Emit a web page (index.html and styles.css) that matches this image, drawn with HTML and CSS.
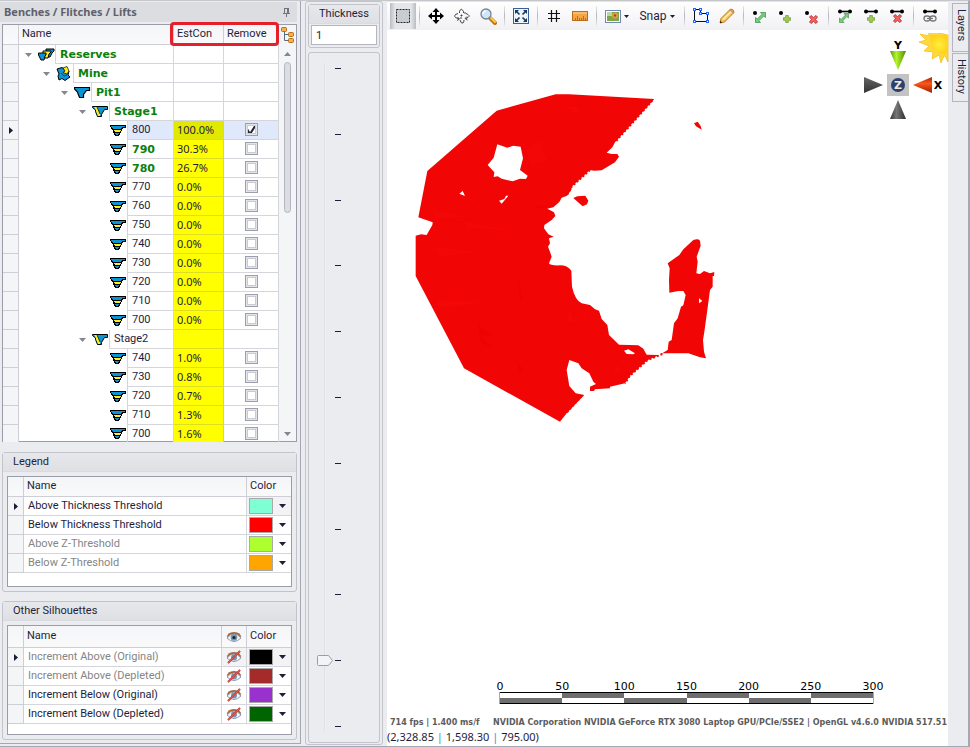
FILE: index.html
```html
<!DOCTYPE html>
<html lang="en">
	<head>
		<meta charset="utf-8">
		<title>Benches / Flitches / Lifts</title>
		<link rel="stylesheet" href="styles.css">
	</head>
	<body>
		<!-- shared icons -->
		<svg class="defs" aria-hidden="true">
			<symbol id="bench" viewBox="0 0 17 13">
				<path d="M0 1h16v3h-3v1h-1v2h-1v2h-1v2H9v1H5v-1H4V9H3V6H2V5H1V3H0z" fill="#000"/>
				<path d="M1 2h14v1h-3v1h-1v1H3V4H2V3H1z" fill="#0a94d6"/>
				<path d="M4 6h7v1h-1v1H5V7H4z" fill="#ffee1c"/>
				<path d="M5 9h4v1H8v1H6v-1H5z" fill="#0a94d6"/>
			</symbol>
			<symbol id="stage" viewBox="0 0 17 13">
				<path d="M.5 1.500h15v3h-3l-3 5v2h-4l-2-5V5l-3-2.500z" fill="#0a94d6" stroke="#000"/>
				<path d="M2 2h3l3 7v2H6L4 6V5z" fill="#ffee1c"/>
				<path d="M5 2l3 7" stroke="#000" stroke-width=".7"/>
			</symbol>
			<symbol id="pit" viewBox="0 0 17 13">
				<path d="M.5 1.500h15v3h-3l-3 4v3h-4l-2-5V6l-3-3z" fill="#0a94d6" stroke="#000" stroke-width="1.200"/>
			</symbol>
			<symbol id="mine" viewBox="0 0 17 16">
				<path d="M1 3l5-1.500L8 3l5 2-1 4 2 2-5 3.500-3-2-3 1.500L2 10l1-2z" fill="#0a94d6" stroke="#000"/>
				<path d="M7 2l4-1.500L13 5l-2 3-4-1.500L9 5z" fill="#ffee1c" stroke="#000" stroke-width=".7"/>
				<path d="M5 7l3 3 3-1" fill="none" stroke="#123" stroke-width=".7"/>
			</symbol>
			<symbol id="reserves" viewBox="0 0 17 13">
				<path d="M8 1h8v2l-2 2-2 4h-2L8 5z" fill="#0a94d6" stroke="#000"/>
				<path d="M5 3h8v1l-2 2-1 4H7L5 6z" fill="#ffee1c" stroke="#000"/>
				<path d="M.5 5H8v2L7 8l-1 4H3L.5 7z" fill="#0a94d6" stroke="#000"/>
			</symbol>
			<symbol id="caret" viewBox="0 0 7 4"><path d="M0 0h7L3.500 4z" fill="currentColor"/></symbol>
			<symbol id="caret-up" viewBox="0 0 7 4"><path d="M0 4h7L3.500 0z" fill="currentColor"/></symbol>
			<symbol id="row-mark" viewBox="0 0 4 7"><path d="M0 0l4 3.500L0 7z" fill="#1a1a38"/></symbol>
			<symbol id="eye" viewBox="0 0 16 12">
				<path d="M1 7q7-8 14 0-7 7-14 0z" fill="#f4f7fb" stroke="#8197b8"/>
				<circle cx="8" cy="6.500" r="3.300" fill="#7695ab"/>
				<circle cx="8" cy="6.500" r="1.600" fill="#17263c"/>
				<path d="M1 5.500q7-7 14 0M2 3.500q6-4 12 0" fill="none" stroke="#a8643c" stroke-width="1.200"/>
			</symbol>
			<symbol id="eye-off" viewBox="0 0 16 14">
				<path d="M1 8q7-8 14 0-7 7-14 0z" fill="#f4f7fb" stroke="#8197b8"/>
				<circle cx="8" cy="7.500" r="3" fill="#7695ab"/>
				<path d="M1 6.500q7-7 14 0M2 4.500q6-4 12 0" fill="none" stroke="#a8643c" stroke-width="1.200"/>
				<path d="M2 13L14 1" stroke="#a8383a" stroke-width="2"/>
				<path d="M2 13L14 1" stroke="#e4574f" stroke-width="1.200"/>
			</symbol>
			<symbol id="resize" viewBox="0 0 12 12">
				<path d="M6 .5h5.500V6L9.500 4.300 4.300 9.500 6 11.500H.5V6l2 1.700 5.200-5.200z" fill="#7ccb7c" stroke="#35934a" stroke-width=".8"/>
			</symbol>
			<symbol id="plus" viewBox="0 0 9 9">
				<path d="M3 .5h3V3h2.500v3H6v2.500H3V6H.5V3H3z" fill="#9fc95a" stroke="#6b9a2c" stroke-width=".8"/>
			</symbol>
			<symbol id="cross" viewBox="0 0 9 9">
				<path d="M2 .5l2.500 2 2.500-2L8.500 2l-2 2.500 2 2.500L7 8.500l-2.500-2-2.500 2L.5 7l2-2.500L.5 2z" fill="#f26464" stroke="#b8252a" stroke-width=".8"/>
			</symbol>
			<symbol id="bar" viewBox="0 0 14 5">
				<path d="M1 2.500h12" stroke="#000" stroke-width="1.600"/>
				<circle cx="2" cy="2.500" r="2"/><circle cx="12" cy="2.500" r="2"/>
			</symbol>
		</svg>

		<div class="app">
			<aside class="sidebar">
				<header class="dock-title">
					<h1>Benches / Flitches / Lifts</h1>
					<button class="pin" aria-label="Auto hide">
						<svg width="9" height="9" viewBox="0 0 9 9"><path d="M2.500 0v5M6.500 0v5M5.500 0v5M2 .5h5M1 5.500h7M4.500 6v3" stroke="#70737f" fill="none"/></svg>
					</button>
				</header>

				<section class="tree">
					<table class="tree-table">
						<colgroup><col class="c-mark"><col><col class="c-est"><col class="c-remove"></colgroup>
						<thead>
							<tr><th></th><th>Name</th><th>EstCon</th><th>Remove</th></tr>
						</thead>
						<tbody>
							<tr><td></td><td><div class="node l0"><svg class="caret"><use href="#caret"/></svg><svg class="ico"><use href="#reserves"/></svg><span class="on">Reserves</span></div></td><td></td><td></td></tr>
							<tr><td></td><td><div class="node l1"><svg class="caret"><use href="#caret"/></svg><svg class="ico tall"><use href="#mine"/></svg><span class="on">Mine</span></div></td><td></td><td></td></tr>
							<tr><td></td><td><div class="node l2"><svg class="caret"><use href="#caret"/></svg><svg class="ico"><use href="#pit"/></svg><span class="on">Pit1</span></div></td><td></td><td></td></tr>
							<tr><td></td><td><div class="node l3"><svg class="caret"><use href="#caret"/></svg><svg class="ico"><use href="#stage"/></svg><span class="on">Stage1</span></div></td><td></td><td></td></tr>
							<tr class="selected"><td><svg class="mark"><use href="#row-mark"/></svg></td><td><div class="node leaf"><svg class="ico"><use href="#bench"/></svg><span>800</span></div></td><td class="est">100.0%</td><td><input type="checkbox" aria-label="Remove 800" checked></td></tr>
							<tr><td></td><td><div class="node leaf"><svg class="ico"><use href="#bench"/></svg><span class="on">790</span></div></td><td class="est">30.3%</td><td><input type="checkbox" aria-label="Remove 790"></td></tr>
							<tr><td></td><td><div class="node leaf"><svg class="ico"><use href="#bench"/></svg><span class="on">780</span></div></td><td class="est">26.7%</td><td><input type="checkbox" aria-label="Remove 780"></td></tr>
							<tr><td></td><td><div class="node leaf"><svg class="ico"><use href="#bench"/></svg><span>770</span></div></td><td class="est">0.0%</td><td><input type="checkbox" aria-label="Remove 770"></td></tr>
							<tr><td></td><td><div class="node leaf"><svg class="ico"><use href="#bench"/></svg><span>760</span></div></td><td class="est">0.0%</td><td><input type="checkbox" aria-label="Remove 760"></td></tr>
							<tr><td></td><td><div class="node leaf"><svg class="ico"><use href="#bench"/></svg><span>750</span></div></td><td class="est">0.0%</td><td><input type="checkbox" aria-label="Remove 750"></td></tr>
							<tr><td></td><td><div class="node leaf"><svg class="ico"><use href="#bench"/></svg><span>740</span></div></td><td class="est">0.0%</td><td><input type="checkbox" aria-label="Remove 740"></td></tr>
							<tr><td></td><td><div class="node leaf"><svg class="ico"><use href="#bench"/></svg><span>730</span></div></td><td class="est">0.0%</td><td><input type="checkbox" aria-label="Remove 730"></td></tr>
							<tr><td></td><td><div class="node leaf"><svg class="ico"><use href="#bench"/></svg><span>720</span></div></td><td class="est">0.0%</td><td><input type="checkbox" aria-label="Remove 720"></td></tr>
							<tr><td></td><td><div class="node leaf"><svg class="ico"><use href="#bench"/></svg><span>710</span></div></td><td class="est">0.0%</td><td><input type="checkbox" aria-label="Remove 710"></td></tr>
							<tr><td></td><td><div class="node leaf"><svg class="ico"><use href="#bench"/></svg><span>700</span></div></td><td class="est">0.0%</td><td><input type="checkbox" aria-label="Remove 700"></td></tr>
							<tr><td></td><td><div class="node l3"><svg class="caret"><use href="#caret"/></svg><svg class="ico"><use href="#stage"/></svg><span>Stage2</span></div></td><td class="est"></td><td></td></tr>
							<tr><td></td><td><div class="node leaf"><svg class="ico"><use href="#bench"/></svg><span>740</span></div></td><td class="est">1.0%</td><td><input type="checkbox" aria-label="Remove Stage2 740"></td></tr>
							<tr><td></td><td><div class="node leaf"><svg class="ico"><use href="#bench"/></svg><span>730</span></div></td><td class="est">0.8%</td><td><input type="checkbox" aria-label="Remove Stage2 730"></td></tr>
							<tr><td></td><td><div class="node leaf"><svg class="ico"><use href="#bench"/></svg><span>720</span></div></td><td class="est">0.7%</td><td><input type="checkbox" aria-label="Remove Stage2 720"></td></tr>
							<tr><td></td><td><div class="node leaf"><svg class="ico"><use href="#bench"/></svg><span>710</span></div></td><td class="est">1.3%</td><td><input type="checkbox" aria-label="Remove Stage2 710"></td></tr>
							<tr><td></td><td><div class="node leaf"><svg class="ico"><use href="#bench"/></svg><span>700</span></div></td><td class="est">1.6%</td><td><input type="checkbox" aria-label="Remove Stage2 700"></td></tr>
						</tbody>
					</table>
					<div class="scroll">
						<button class="tree-menu" aria-label="Choose levels">
							<svg width="14" height="16" viewBox="0 0 14 16"><path d="M3.500 5v8.500H7M3.500 7.500H7" fill="none" stroke="#5a6a80"/><g fill="#f6b04e" stroke="#b86d1a"><rect x=".5" y=".5" width="5" height="4" rx="1"/><rect x="7.500" y="5.500" width="5" height="4" rx="1"/><rect x="7.500" y="11.500" width="5" height="4" rx="1"/></g></svg>
						</button>
						<svg class="caret"><use href="#caret-up"/></svg>
						<div class="scroll-track"><div class="scroll-thumb"></div></div>
						<svg class="caret"><use href="#caret"/></svg>
					</div>
					<div class="highlight"></div>
				</section>

				<section class="group">
					<h2>Legend</h2>
					<div class="grid-box">
						<table class="grid">
							<colgroup><col class="c-mark"><col><col class="c-color"></colgroup>
							<thead><tr><th></th><th>Name</th><th>Color</th></tr></thead>
							<tbody>
								<tr class="current"><td><svg class="mark"><use href="#row-mark"/></svg></td><td>Above Thickness Threshold</td><td><div class="color"><i class="swatch aqua"></i><select aria-label="Above Thickness Threshold color"></select></div></td></tr>
								<tr><td></td><td>Below Thickness Threshold</td><td><div class="color"><i class="swatch red"></i><select aria-label="Below Thickness Threshold color"></select></div></td></tr>
								<tr class="off"><td></td><td>Above Z-Threshold</td><td><div class="color"><i class="swatch lime"></i><select aria-label="Above Z-Threshold color"></select></div></td></tr>
								<tr class="off"><td></td><td>Below Z-Threshold</td><td><div class="color"><i class="swatch orange"></i><select aria-label="Below Z-Threshold color"></select></div></td></tr>
							</tbody>
						</table>
					</div>
				</section>

				<section class="group others">
					<h2>Other Silhouettes</h2>
					<div class="grid-box">
						<table class="grid">
							<colgroup><col class="c-mark"><col><col class="c-eye"><col class="c-color"></colgroup>
							<thead><tr><th></th><th>Name</th><th class="eye"><svg width="16" height="12"><use href="#eye"/></svg></th><th>Color</th></tr></thead>
							<tbody>
								<tr class="off current"><td><svg class="mark"><use href="#row-mark"/></svg></td><td>Increment Above (Original)</td><td class="eye"><svg width="16" height="14"><use href="#eye-off"/></svg></td><td><div class="color"><i class="swatch black"></i><select aria-label="Increment Above (Original) color"></select></div></td></tr>
								<tr class="off"><td></td><td>Increment Above (Depleted)</td><td class="eye"><svg width="16" height="14"><use href="#eye-off"/></svg></td><td><div class="color"><i class="swatch brown"></i><select aria-label="Increment Above (Depleted) color"></select></div></td></tr>
								<tr><td></td><td>Increment Below (Original)</td><td class="eye"><svg width="16" height="14"><use href="#eye-off"/></svg></td><td><div class="color"><i class="swatch purple"></i><select aria-label="Increment Below (Original) color"></select></div></td></tr>
								<tr><td></td><td>Increment Below (Depleted)</td><td class="eye"><svg width="16" height="14"><use href="#eye-off"/></svg></td><td><div class="color"><i class="swatch green"></i><select aria-label="Increment Below (Depleted) color"></select></div></td></tr>
							</tbody>
						</table>
					</div>
				</section>
			</aside>

			<section class="thickness">
				<div class="thick-box">
					<label for="thick">Thickness</label>
					<input id="thick" type="text" value="1">
				</div>
				<div class="slider-box">
					<input type="range" min="0" max="10" value="1" aria-label="Thickness">
					<div class="ticks"><i></i><i></i><i></i><i></i><i></i><i></i><i></i><i></i><i></i><i></i><i></i></div>
				</div>
			</section>

			<main class="view">
				<nav class="toolbar">
					<button class="pressed" aria-label="Select"><svg width="16" height="16" viewBox="0 0 16 16"><rect x="1.500" y="1.500" width="13" height="13" fill="#c9ccd2" stroke="#222" stroke-dasharray="2 1"/></svg></button>
					<hr>
					<button aria-label="Pan"><svg width="16" height="16" viewBox="0 0 16 16"><path d="M8 2v12M2 8h12" stroke="#000" stroke-width="2"/><path d="M8 0l3.500 4h-7zM8 16l3.500-4h-7zM0 8l4-3.500v7zM16 8l-4-3.500v7z"/></svg></button>
					<button aria-label="Orbit"><svg width="16" height="16" viewBox="0 0 16 16"><g fill="none" stroke="#444"><path d="M5.500 5V3.500Q7-1 9.500 3.500V5M4 5.500Q-1 7 1.500 9.500L5 11M3 12.500L5.500 11 3.500 9M12 5.500q5 2 2 4l-2 1M13.500 12L11 10.500l2-2M6 12q1 4 3 3 1-1 1-3M6.500 7.500h2M7.500 6.500v2M10 5h2M6 10h2"/></g></svg></button>
					<button aria-label="Zoom"><svg width="17" height="17" viewBox="0 0 17 17"><path d="M10 10l5 5" stroke="#b6781c" stroke-width="4" stroke-linecap="round"/><path d="M11 10l4 4" stroke="#ffc84a" stroke-width="2" stroke-linecap="round"/><circle cx="6" cy="6" r="5" fill="#cfe5f8" stroke="#77828f" stroke-width="1.300"/><path d="M3 6q0-3 3-3" fill="none" stroke="#fff" stroke-width="1.500"/></svg></button>
					<hr>
					<button aria-label="Zoom to fit"><svg width="16" height="16" viewBox="0 0 16 16"><rect x=".5" y=".5" width="15" height="15" fill="#eef4fb" stroke="#3c5f9c"/><path d="M3 3l3.500 3.500M13 3L9.500 6.500M3 13l3.500-3.500M13 13L9.500 9.500" stroke="#17365f" stroke-width="1.600"/><path d="M2 2h4L2 6zM14 2h-4l4 4zM2 14h4l-4-4zM14 14h-4l4-4z" fill="#17365f"/></svg></button>
					<hr>
					<button aria-label="Grid"><svg width="12" height="12" viewBox="0 0 12 12"><path d="M3.500 0v12M8.500 0v12M0 3.500h12M0 8.500h12" stroke="#111" stroke-width="1.200"/></svg></button>
					<button aria-label="Measure"><svg width="16" height="10" viewBox="0 0 16 10"><rect x=".5" y=".5" width="15" height="9" fill="#f3a648" stroke="#bf6c18"/><path d="M1 2h14" stroke="#fbd08e"/><path d="M3.500 9V7M5.500 9V5M7.500 9V7M9.500 9V7M11.500 9V5M13.500 9V7" stroke="#a4601a" stroke-width=".8"/></svg></button>
					<hr>
					<button class="drop" aria-label="Background"><svg width="16" height="13" viewBox="0 0 16 13"><rect x=".5" y=".5" width="15" height="12" fill="#fff" stroke="#7087b8"/><path d="M2 2h12v9H2z" fill="#7da646"/><path d="M2 2h5v4H2z" fill="#b7d8a0"/><circle cx="10" cy="5.500" r="3" fill="#e79a45"/><circle cx="10" cy="5.500" r="1.200" fill="#a34a20"/></svg><svg class="caret"><use href="#caret"/></svg></button>
					<button class="drop snap">Snap<svg class="caret"><use href="#caret"/></svg></button>
					<hr>
					<button aria-label="Draw polygon"><svg width="16" height="16" viewBox="0 0 16 16"><path d="M1.500 2v11.500h13V5.500h-7V1.500H2" fill="none" stroke="#111"/><g fill="#fff" stroke="#2464f0"><rect x=".5" y=".5" width="2" height="2"/><rect x="6.500" y=".5" width="2" height="2"/><rect x="6.500" y="4.500" width="2" height="2"/><rect x="13.500" y="4.500" width="2" height="2"/><rect x=".5" y="12.500" width="2" height="2"/><rect x="13.500" y="12.500" width="2" height="2"/></g></svg></button>
					<button aria-label="Edit"><svg width="16" height="16" viewBox="0 0 16 16"><path d="M1 15l1-4.500L11.500 1q3.500 0 3.500 3.500L5.500 14z" fill="#f7c35c" stroke="#b87a20"/><path d="M4 11.500L13 3" stroke="#fff0c0" stroke-width="1.400"/><path d="M11 1.500l3.500 3.500" stroke="#d98c70" stroke-width="1.500"/><path d="M1 15l.5-2 1.500 1.500z"/></svg></button>
					<hr>
					<button aria-label="Move point"><svg width="16" height="16" viewBox="0 0 16 16"><circle cx="3" cy="5" r="2"/><use href="#resize" x="3" y="4" width="11" height="11"/></svg></button>
					<button aria-label="Add point"><svg width="16" height="16" viewBox="0 0 16 16"><circle cx="3" cy="5" r="2"/><use href="#plus" x="5" y="7" width="8" height="8"/></svg></button>
					<button aria-label="Delete point"><svg width="16" height="16" viewBox="0 0 16 16"><circle cx="3" cy="5" r="2"/><use href="#cross" x="5" y="7" width="9" height="9"/></svg></button>
					<hr>
					<button aria-label="Move edge"><svg width="16" height="16" viewBox="0 0 16 16"><use href="#bar" x="1" y="1" width="14" height="5"/><use href="#resize" x="2" y="5" width="10" height="10"/></svg></button>
					<button aria-label="Add edge"><svg width="16" height="16" viewBox="0 0 16 16"><use href="#bar" x="1" y="1" width="14" height="5"/><use href="#plus" x="4" y="7" width="8" height="8"/></svg></button>
					<button aria-label="Delete edge"><svg width="16" height="16" viewBox="0 0 16 16"><use href="#bar" x="1" y="1" width="14" height="5"/><use href="#cross" x="4" y="6" width="9" height="9"/></svg></button>
					<hr>
					<button aria-label="Link edges"><svg width="16" height="16" viewBox="0 0 16 16"><use href="#bar" x="1" y="1" width="14" height="5"/><g fill="none" stroke="#777" stroke-width="1.300"><rect x="2" y="8" width="6" height="5" rx="2.500"/><rect x="8" y="8" width="6" height="5" rx="2.500"/><path d="M5 10.500h6"/></g></svg></button>
				</nav>

				<div class="scene">
					<svg class="model" width="330" height="350" viewBox="0 0 990 1050" role="img" aria-label="Bench silhouette">
						<path fill="#f20505" fill-rule="evenodd" d="M467 43L507 43 763 57 645 187 637 202 620 218 635 222 652 222 657 230 645 247 615 265 605 271 582 272 570 270 515 320 514 330 501 347 485 353 478 366 460 382 442 386 462 397 466 408 455 420 433 435 432 445 445 463 461 470 447 475 450 490 444 500 449 513 455 530 447 550Q450 557 480 556 502 556 514 572L516 620Q525 660 545 670L570 675 585 688 597 692 605 717 622 735 627 765 657 794 715 796 730 806 740 824 778 825 803 810 806 785 815 780 822 730 833 715 843 680 850 676 857 645 850 633 835 633 808 638 807 600 809 565 803 550 838 525 850 508 880 480Q895 475 900 482L902 497 890 530 893 545 889 580 900 582 912 573 930 580 943 576 942 588H938V620L930 630 922 690 913 755 909 780 912 815 918 835 900 832 865 820H790L742 841 690 887 675 910 630 920V925L585 928 582 933H570V920L588 912 580 905 568 880 545 865 535 850 508 840 500 870 508 918 527 940 553 945 500 1000 480 1025 192 865 47 588V467L63 463 80 465 97 435 98 427 55 412 82 273 290 92zM292 193L281 233 263 255 283 277 281 291 293 289 305 296 338 304 360 296 378 297 383 287 360 270 369 235 362 200 340 197 322 203zM178 341L188 333 195 348zM297 362L313 357 318 347 325 347 305 371zM672 812L685 808 705 820 700 823 680 822zM897 655L907 663 897 670z"/>
						<!-- block edges -->
						<path fill="none" stroke="#f20505" stroke-width="6" stroke-dasharray="6 6" d="M757 62L645 187M570 270L515 320 500 347M787 822L742 841 690 887 675 910M545 948L500 998"/>
						<path fill="#f20505" d="M882 130l11-5 9 13 3 11-17-10zM520 354l12-5 24-2 9 15-4 11-13 6z"/>
						<g fill="#e00000" opacity=".25"><path d="M234 735l44 30-38 5zM238 760l36 42-30-14zM356 600l12 60-10-10zM350 840l20 30-12 5zM400 380l50-5-20 12z"/></g>
						<g fill="#ff1515" opacity=".15"><path d="M90 390l120 20-100 5zM190 425l180 28-170-8zM100 500l130 15-110 18zM110 660l180 5-170 18zM500 80l30 0 20 30zM380 210l40-30 20 60-50 20zM510 680l14 50-24-5zM550 690l15 30-15-5zM655 850l8 30-28-2z"/></g>
					</svg>
					<svg class="compass" width="90" height="94" viewBox="860 33 90 94" role="img" aria-label="View orientation">
						<defs>
							<linearGradient id="gy"><stop offset="0" stop-color="#5f9c0a"/><stop offset=".4" stop-color="#b4f52e"/><stop offset="1" stop-color="#4f8a05"/></linearGradient>
							<linearGradient id="gk"><stop offset="0" stop-color="#333"/><stop offset=".4" stop-color="#777"/><stop offset="1" stop-color="#2c2c2c"/></linearGradient>
							<linearGradient id="gkv" x2="0" y2="1"><stop offset="0" stop-color="#666"/><stop offset="1" stop-color="#333"/></linearGradient>
							<linearGradient id="gr" x2="0" y2="1"><stop offset="0" stop-color="#a62400"/><stop offset=".4" stop-color="#ff5518"/><stop offset="1" stop-color="#9c2200"/></linearGradient>
							<radialGradient id="gs"><stop offset="0" stop-color="#ffef3c"/><stop offset="1" stop-color="#ffd21c"/></radialGradient>
						</defs>
						<path d="M948 35V62l-3-6-1 0-3 7-2-8-7 4 1-7-9-1 5-5-10-4 7-2-6-6 10 2-4-6z" fill="#ffd83a" stroke="#f2b400" stroke-width=".6"/>
						<path d="M930 35h18v19q-17 2-18-19z" fill="url(#gs)"/>
						<path d="M890 51h16l-8 19z" fill="url(#gy)"/>
						<path d="M890 119h16l-8-19z" fill="url(#gk)"/>
						<path d="M864 77v16l19-8z" fill="url(#gkv)"/>
						<path d="M932 77v16l-19-8z" fill="url(#gr)"/>
						<rect x="887" y="74" width="22" height="22" fill="#c3c3c3"/>
						<circle cx="898" cy="85" r="7" fill="#2c4070"/>
						<text x="898" y="89" class="z">Z</text>
						<text x="898" y="49">Y</text>
						<text x="938" y="89">X</text>
					</svg>
				</div>

				<div class="scale">
					<div class="scale-labels"><span>0</span><span>50</span><span>100</span><span>150</span><span>200</span><span>250</span><span>300</span></div>
					<div class="scale-bar"><i></i><i></i><i></i><i></i><i></i><i></i></div>
				</div>
				<div class="stats"><span>714 fps | 1.400 ms/f</span><span>NVIDIA Corporation NVIDIA GeForce RTX 3080 Laptop GPU/PCIe/SSE2 | OpenGL v4.6.0 NVIDIA 517.51</span></div>
				<div class="coords">(2,328.85 <b>|</b> 1,598.30 <b>|</b> 795.00)</div>
			</main>

			<aside class="side-tabs">
				<button>Layers</button>
				<button>History</button>
			</aside>
		</div>
	</body>
</html>
```
FILE: styles.css
```css
* {
	box-sizing: border-box;
	margin: 0;
	padding: 0;
}

body {
	height: 100vh;
	background-color: #ebecef;
	color: #1e1e3c;
	font: 11px/18px Roboto, "Liberation Sans", sans-serif;
	overflow: hidden;
}

button,
input,
select {
	font: inherit;
	color: inherit;
	border: 0;
	background: none;
}

svg {
	display: block;
	flex: none;
}

.defs {
	position: absolute;
	width: 0;
	height: 0;
}

.app {
	display: flex;
	height: 100%;
	border: 1px solid #a5a7b3;
	border-left: 0;
	border-top-color: #c5c7cb;
	border-right: 2px solid #a5a7b3;
}

/* left column */
.sidebar {
	display: flex;
	flex-direction: column;
	flex: none;
	width: 301px;
	margin-bottom: 2px;
	padding: 0 3px 3px 2px;
	border-right: 1px solid #a5a7b3;
	border-bottom: 1px solid #a5a7b3;
}

.dock-title {
	display: flex;
	align-items: center;
	justify-content: space-between;
	height: 20px;
	margin: 1px 0 2px -2px;
	padding: 0 6px 0 4px;
	background-color: #dcdde1;
}

h1 {
	font: bold 11px/18px "Noto Sans", sans-serif;
	color: #5f626d;
}

h2 {
	height: 19px;
	padding-left: 10px;
	font-size: 11px;
	font-weight: normal;
	border-bottom: 1px solid #dadbe0;
	background: linear-gradient(#e7e8eb, #dfe0e4);
}

/* tree list */
.tree {
	position: relative;
	display: flex;
	flex: 1;
	min-height: 0;
	overflow: clip;
	overflow-clip-margin: 3px;
	border: 1px solid #9a9caa;
	background-color: #fff;
	margin-bottom: 10px;
}

table {
	flex: 1;
	width: 100%;
	table-layout: fixed;
	border-spacing: 0;
}

.tree-table {
	align-self: flex-start;
}

.c-mark {
	width: 16px;
}

.c-est {
	width: 50px;
}

.c-remove {
	width: 55px;
}

.c-eye {
	width: 25px;
}

.c-color {
	width: 44px;
}

th {
	height: 20px;
	padding-left: 3px;
	font-weight: normal;
	text-align: left;
	vertical-align: top;
	border-right: 1px solid #cdced6;
	border-bottom: 1px solid #cdced6;
	background: linear-gradient(#f4f5f7, #fafafb);
}

td {
	height: 19px;
	border-right: 1px solid #d5d6dc;
	border-bottom: 1px solid #d5d6dc;
	white-space: nowrap;
}

td:first-child {
	border-color: #cdced6;
	background-color: #f4f5f7;
}

.tree-table td:nth-child(2) {
	border-bottom: 0;
}

.mark {
	width: 4px;
	height: 7px;
	margin: 0 auto;
}

.node {
	display: flex;
	align-items: center;
	height: 19px;
}

.l0 { padding-left: 6px; }
.l1 { padding-left: 24px; }
.l2 { padding-left: 42px; }
.l3 { padding-left: 60px; }
.leaf { padding-left: 91px; }

.caret {
	width: 7px;
	height: 4px;
	color: #85868f;
}

.node .caret {
	margin-right: 6px;
}

.ico {
	width: 17px;
	height: 13px;
}

.ico.tall {
	height: 16px;
}

.node span {
	flex: 1;
	height: 19px;
	padding-left: 4px;
	border-left: 1px solid #d5d6dc;
	border-bottom: 1px solid #d5d6dc;
}

.node .on {
	font: bold 11px/19px "DejaVu Sans", sans-serif;
	color: #0c800c;
}

td.est {
	padding-left: 3px;
	font-family: "Noto Sans", sans-serif;
	background-color: #ff0;
	border-color: #dede20;
}

.selected td:nth-child(4),
.selected .node span {
	background-color: #e0e8fc;
}

.selected td.est {
	background-color: #e2e900;
}

input[type="checkbox"] {
	display: block;
	width: 13px;
	height: 13px;
	margin: 0 auto 1px;
	appearance: none;
	border: 1px solid #9c9eac;
	background-color: #fff;
	box-shadow: inset 0 0 0 1px #e4e5ea, inset 0 0 0 2px #c9cad4;
}

input[type="checkbox"]:checked {
	background: #fff url("data:image/svg+xml,%3Csvg xmlns='http://www.w3.org/2000/svg' viewBox='0 0 13 13'%3E%3Cpath d='M2 6l3 5 7-11' fill='none' stroke='%23222238' stroke-width='2'/%3E%3C/svg%3E") center / 13px border-box;
}

.scroll {
	display: flex;
	flex-direction: column;
	align-items: center;
	flex: none;
	width: 17px;
	padding-bottom: 5px;
	background-color: #f4f5f7;
}

.tree-menu {
	width: 17px;
	height: 20px;
	margin-bottom: 7px;
	padding: 2px;
}

.scroll-track {
	flex: 1;
	padding-top: 6px;
}

.scroll-thumb {
	width: 7px;
	height: 151px;
	border: 1px solid #b4b5bf;
	border-radius: 4px;
	background-color: #dcdde3;
}

.tree .highlight {
	position: absolute;
	top: -3px;
	right: 17px;
	width: 109px;
	height: 24px;
	border: 3px solid #e5202a;
	border-radius: 4px;
}

/* the last visible row is cut by the frame */
.tree-table tbody tr:last-child td,
.tree-table tbody tr:last-child span {
	border-bottom: 0;
}

.tree-table tbody tr:last-child td,
.tree-table tbody tr:last-child .node,
.tree-table tbody tr:last-child span {
	height: 17px;
	line-height: 17px;
}

/* group boxes */
.group {
	flex: none;
	margin-bottom: 9px;
	border: 1px solid #c2c3cb;
	border-radius: 3px;
}

.group.others {
	margin-bottom: 0;
}

.grid-box {
	margin: 4px;
	padding-bottom: 13px;
	border: 1px solid #9a9caa;
	background-color: #fff;
}

.others .grid-box {
	padding-bottom: 10px;
}

.others th {
	height: 22px;
	line-height: 20px;
}

.grid td:nth-child(2) {
	padding-left: 4px;
}

.grid tr > :last-child {
	border-right: 0;
}

.current td:nth-child(n + 3) {
	background-color: #f3f3f5;
}

.off {
	color: #858585;
}

.eye svg {
	margin: 0 auto;
}

th.eye {
	padding: 0;
	vertical-align: middle;
}

.color {
	display: flex;
	align-items: center;
	gap: 4px;
	padding-left: 2px;
}

.swatch {
	width: 24px;
	height: 16px;
	border: 1px solid #a9a9a9;
}

.aqua { background-color: #7fffd4; }
.red { background-color: #f00; }
.lime { background-color: #adff2f; }
.orange { background-color: #ffa500; }
.black { background-color: #000; }
.brown { background-color: #a52a2a; }
.purple { background-color: #9932cc; }
.green { background-color: #006400; }

select {
	width: 11px;
	height: 16px;
	appearance: none;
	background: url("data:image/svg+xml,%3Csvg xmlns='http://www.w3.org/2000/svg' viewBox='0 0 7 4'%3E%3Cpath d='M0 0h7L3.500 4z' fill='%231e1e3c'/%3E%3C/svg%3E") center / 7px 4px no-repeat;
}

/* thickness column */
.thickness {
	display: flex;
	flex-direction: column;
	flex: none;
	gap: 4px;
	width: 78px;
	margin: 0 4px 1px;
	padding: 2px 2px 1px;
	border: 1px solid #c2c3cb;
	border-radius: 3px;
}

.thick-box,
.slider-box {
	border: 1px solid #c2c3cb;
	border-radius: 3px;
}

.thick-box label {
	display: block;
	height: 19px;
	text-align: center;
	border-bottom: 1px solid #dadbe0;
	background: linear-gradient(#e7e8eb, #dfe0e4);
}

.thick-box input {
	display: block;
	width: calc(100% - 4px);
	height: 20px;
	margin: 1px 2px 2px;
	padding-left: 4px;
	border: 1px solid #b4b5bf;
	background-color: #fff;
}

.slider-box {
	display: flex;
	flex: 1;
	gap: 1px;
	min-height: 0;
	padding: 10px 0 10px 7px;
}

.slider-box input {
	width: 18px;
	height: 100%;
	appearance: none;
	writing-mode: vertical-lr;
	direction: rtl;
	background: linear-gradient(90deg, transparent 8px, #d9d9e2 8px, #f6f6f9 10px, transparent 10px);
}

.slider-box input::-webkit-slider-thumb {
	appearance: none;
	width: 17px;
	height: 11px;
	background: url("data:image/svg+xml,%3Csvg xmlns='http://www.w3.org/2000/svg' viewBox='0 0 17 11'%3E%3Cpath d='M1.500.5h10l4 5-4 5h-10q-1 0-1-1v-8q0-1 1-1z' fill='%23f4f4f6' stroke='%239a9caa'/%3E%3C/svg%3E");
}

.ticks {
	display: flex;
	flex-direction: column;
	justify-content: space-between;
	padding: 5px 0;
}

.ticks i {
	width: 6px;
	height: 1px;
	background-color: #1e1e3c;
}

/* 3D view */
.view {
	display: flex;
	flex-direction: column;
	flex: 1;
	min-width: 0;
	background-color: #fff;
}

.toolbar {
	display: flex;
	align-items: center;
	height: 29px;
	padding: 0 3px;
	border-top: 1px solid #e3e4e7;
	background: linear-gradient(#fff, #f0f1f4);
}

.toolbar button {
	display: flex;
	align-items: center;
	justify-content: center;
	flex: none;
	width: 26px;
	height: 26px;
}

.toolbar .pressed {
	background: linear-gradient(90deg, #b9bcc4, #e4e6ea 20%, #e4e6ea 80%, #b9bcc4);
}

.toolbar .drop {
	gap: 3px;
	width: 33px;
}

.toolbar .snap {
	width: 48px;
	font-size: 12px;
}

.toolbar .caret {
	width: 5px;
	height: 3px;
	color: #1e1e3c;
}

.toolbar hr {
	flex: none;
	width: 1px;
	height: 20px;
	margin: 0 3px;
	border: 0;
	background: linear-gradient(#e8e9ec, #b4b6be, #e8e9ec);
}

.scene {
	position: relative;
	flex: 1;
}

.model {
	position: absolute;
	left: 13px;
	top: 50px;
}

.compass {
	position: absolute;
	right: -2px;
	top: 3px;
}

.compass text {
	font: bold 11px "DejaVu Sans", sans-serif;
	text-anchor: middle;
}

.compass .z {
	fill: #f4ead4;
}

.scale {
	margin: 0 75px 15px 113px;
	color: #000;
}

.scale-labels {
	display: flex;
	justify-content: space-between;
	height: 12px;
	line-height: 14px;
}

.scale-labels span {
	display: flex;
	justify-content: center;
	width: 0;
	font-family: "DejaVu Sans", sans-serif;
}

.scale-bar {
	display: flex;
	height: 12px;
	border: 1px solid #000;
	border-width: 1px 0;
	box-shadow: -1px 0 #aaa, 1px 0 #aaa;
}

.scale-bar i {
	flex: 1;
	background: linear-gradient(#fff 50%, #6e6e6e 50%);
}

.scale-bar i:nth-child(even) {
	background: linear-gradient(#6e6e6e 50%, #fff 50%);
}

.stats {
	display: flex;
	justify-content: space-between;
	padding: 0 1px 0 3px;
	font: bold 8px/8px "DejaVu Sans", sans-serif;
	color: #5c5c5c;
	white-space: nowrap;
}

.coords {
	height: 19px;
	font-family: "Noto Sans", sans-serif;
	line-height: 20px;
}

.coords b {
	font-weight: normal;
	color: #3c8fd8;
}

/* collapsed panels */
.side-tabs {
	display: flex;
	flex-direction: column;
	flex: none;
	gap: 1px;
	width: 20px;
	padding: 2px 0 0 4px;
}

.side-tabs button {
	width: 16px;
	padding: 5px 0;
	height: 49px;
	border: 1px solid #b4b5bf;
	border-right: 0;
	writing-mode: vertical-rl;
	line-height: 14px;
	text-align: left;
	background-color: #ebecef;
}
```
